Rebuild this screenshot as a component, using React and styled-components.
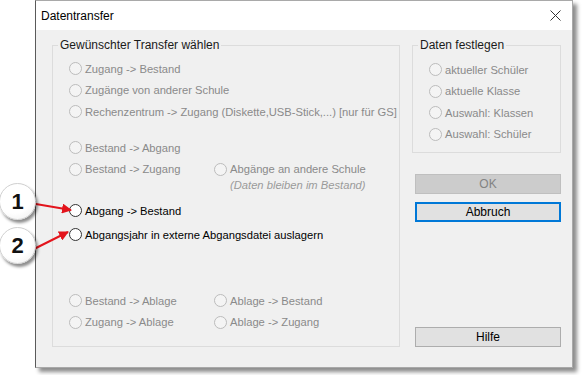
import styled, { createGlobalStyle } from "styled-components";

const GlobalStyle = createGlobalStyle`
  body {
    margin: 0;
    background: #ffffff;
    font-family: "Liberation Sans", Arial, sans-serif;
  }
`;

function Radio(props) {
  const { label, enabled } = props;
  return (
    <RadioRow>
      <Circle $enabled={enabled} />
      <Label $enabled={enabled}>{label}</Label>
    </RadioRow>
  );
}

function App() {
  return (
    <Page>
      <GlobalStyle />
      <Window>
        <TitleBar>
          <Title>Datentransfer</Title>
          <svg width="11" height="11" viewBox="0 0 11 11">
            <path d="M0.5 0.5 L10.5 10.5 M10.5 0.5 L0.5 10.5" stroke="#333" strokeWidth="1" />
          </svg>
        </TitleBar>
        <Body>
          <LeftBox>
            <Legend>Gewünschter Transfer wählen</Legend>
            <Radio label="Zugang -> Bestand" />
            <Radio label="Zugänge von anderer Schule" />
            <Radio label="Rechenzentrum -> Zugang (Diskette,USB-Stick,...) [nur für GS]" />

            <Line $mt={14.5}>
              <Cell>
                <Radio label="Bestand -> Abgang" />
              </Cell>
            </Line>
            <Line>
              <Cell>
                <Radio label="Bestand -> Zugang" />
              </Cell>
              <Cell>
                <Radio label="Abgänge an andere Schule" />
                <Note>(Daten bleiben im Bestand)</Note>
              </Cell>
            </Line>

            <Line $mt={8}>
              <Radio label="Abgang -> Bestand" enabled />
            </Line>
            <Line $mt={2.5}>
              <Radio label="Abgangsjahr in externe Abgangsdatei auslagern" enabled />
            </Line>

            <Line $mt={44.5}>
              <Cell>
                <Radio label="Bestand -> Ablage" />
              </Cell>
              <Cell>
                <Radio label="Ablage -> Bestand" />
              </Cell>
            </Line>
            <Line>
              <Cell>
                <Radio label="Zugang -> Ablage" />
              </Cell>
              <Cell>
                <Radio label="Ablage -> Zugang" />
              </Cell>
            </Line>
          </LeftBox>

          <RightColumn>
            <RightBox>
              <Legend>Daten festlegen</Legend>
              <Radio label="aktueller Schüler" />
              <Radio label="aktuelle Klasse" />
              <Radio label="Auswahl: Klassen" />
              <Radio label="Auswahl: Schüler" />
            </RightBox>
            <Button $variant="disabled" $mt={21}>OK</Button>
            <Button $variant="focus" $mt={8}>Abbruch</Button>
            <Button $mt="auto">Hilfe</Button>
          </RightColumn>
        </Body>
      </Window>

      <Arrows width="90" height="270" viewBox="0 0 90 270">
        <defs>
          <marker id="head" viewBox="0 0 10 10" refX="9" refY="5" markerWidth="5" markerHeight="5" orient="auto">
            <path d="M0 0 L10 5 L0 10 z" fill="#e3141c" />
          </marker>
        </defs>
        <line x1="30" y1="203" x2="71" y2="210" stroke="#e3141c" strokeWidth="2" markerEnd="url(#head)" />
        <line x1="30" y1="251" x2="68" y2="232" stroke="#e3141c" strokeWidth="2" markerEnd="url(#head)" />
      </Arrows>
      <Badge $top={183}>1</Badge>
      <Badge $top={227}>2</Badge>
    </Page>
  );
}

const Page = styled.div`
  position: relative;
  width: 582px;
  height: 375px;
  box-sizing: border-box;
  padding: 0 9px 0 35px;
  overflow: hidden;
`;

const Window = styled.div`
  width: 538px;
  height: 368px;
  box-sizing: border-box;
  display: flex;
  flex-direction: column;
  border: 1px solid #a9a9a9;
  border-left-color: #5a5a5a;
  box-shadow: 4px 4px 4px rgba(0, 0, 0, 0.45);
  font-size: 12px;
`;

const TitleBar = styled.div`
  height: 29px;
  flex-shrink: 0;
  background: #ffffff;
  display: flex;
  align-items: center;
  justify-content: space-between;
  padding: 0 11px 0 5px;
`;

const Title = styled.span`
  font-size: 12px;
  color: #000;
`;

const Body = styled.div`
  flex: 1;
  background: #f0f0f0;
  display: flex;
  gap: 12px;
  padding: 8px 11px 20px 16px;
`;

const Box = styled.fieldset`
  margin: 0;
  min-width: 0;
  box-sizing: border-box;
  border: 1px solid #dcdcdc;
  padding: 5px 0 0 16px;
`;

const LeftBox = styled(Box)`
  width: 350px;
`;

const RightBox = styled(Box)`
  width: 149px;
  height: 115px;
  flex-shrink: 0;
  padding-top: 6px;
`;

const Legend = styled.legend`
  padding: 0 2px;
  margin-left: -11px;
  line-height: 15px;
  color: #1a1a1a;
`;

const RadioRow = styled.div`
  height: 21.5px;
  display: flex;
  align-items: center;
  white-space: nowrap;
`;

const Circle = styled.span`
  width: 13px;
  height: 13px;
  box-sizing: border-box;
  border-radius: 50%;
  flex-shrink: 0;
  border: 1px solid ${(p) => (p.$enabled ? "#333333" : "#bcbcbc")};
  background: ${(p) => (p.$enabled ? "#ffffff" : "#f4f4f4")};
`;

const Label = styled.span`
  margin-left: 3px;
  font-size: 11.2px;
  color: ${(p) => (p.$enabled ? "#000000" : "#8a8a8a")};
`;

const Line = styled.div`
  display: flex;
  align-items: flex-start;
  margin-top: ${(p) => p.$mt || 0}px;
`;

const Cell = styled.div`
  width: 145px;
  display: flex;
  flex-direction: column;
`;

const Note = styled.div`
  margin: -2px 0 0 16px;
  line-height: 14px;
  font-size: 11.2px;
  font-style: italic;
  color: #9a9a9a;
  white-space: nowrap;
`;

const RightColumn = styled.div`
  width: 149px;
  display: flex;
  flex-direction: column;
  align-items: flex-end;
`;

const Button = styled.div`
  width: 146px;
  height: 20px;
  box-sizing: border-box;
  margin-top: ${(p) => (p.$mt === "auto" ? "auto" : `${p.$mt}px`)};
  display: flex;
  align-items: center;
  justify-content: center;
  font-size: 12px;
  background: ${(p) => (p.$variant === "disabled" ? "#cccccc" : "#e1e1e1")};
  color: ${(p) => (p.$variant === "disabled" ? "#838383" : "#000000")};
  border: ${(p) =>
    p.$variant === "focus"
      ? "2px solid #0078d7"
      : p.$variant === "disabled"
      ? "1px solid #bfbfbf"
      : "1px solid #adadad"};
`;

const Arrows = styled.svg`
  position: absolute;
  left: 0;
  top: 0;
`;

const Badge = styled.div`
  position: absolute;
  left: -1px;
  top: ${(p) => p.$top}px;
  width: 35px;
  height: 35px;
  border-radius: 50%;
  background: radial-gradient(circle at 40% 35%, #ffffff 55%, #ececec 100%);
  border: 1px solid #d0d0d0;
  box-shadow: 2px 3px 3px rgba(0, 0, 0, 0.45);
  display: flex;
  align-items: center;
  justify-content: center;
  font-family: "Liberation Sans", Arial, sans-serif;
  font-weight: 700;
  font-size: 22px;
  color: #111;
`;

export default App;
